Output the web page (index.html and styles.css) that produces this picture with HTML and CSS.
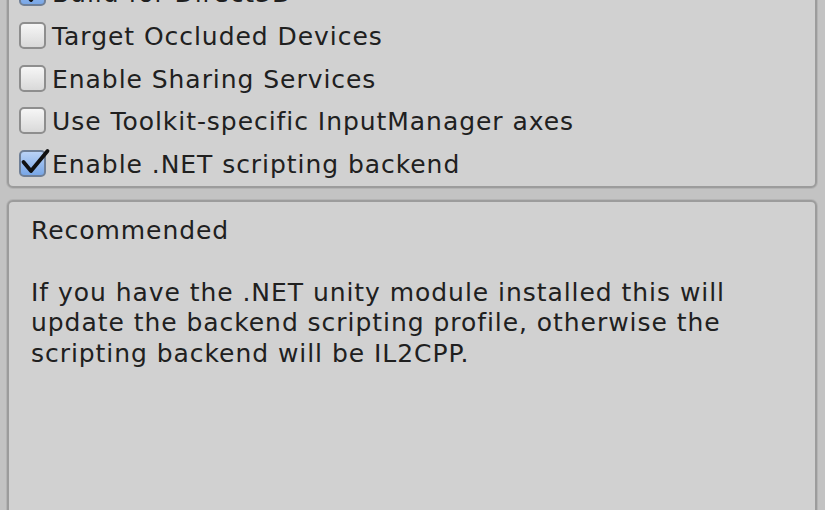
FILE: index.html
```html
<!DOCTYPE html>
<html>
<head>
<meta charset="utf-8">
<link rel="stylesheet" href="styles.css">
</head>
<body>
<div class="panel options">
  <div class="row">
    <span class="box checked"><svg class="tick" viewBox="0 0 30 30"><path d="M4.5 12 L12 21 L28.5 1"/></svg></span>
    <span class="label">Build for Direct3D</span>
  </div>
  <div class="row">
    <span class="box"></span>
    <span class="label">Target Occluded Devices</span>
  </div>
  <div class="row">
    <span class="box"></span>
    <span class="label">Enable Sharing Services</span>
  </div>
  <div class="row">
    <span class="box"></span>
    <span class="label">Use Toolkit-specific InputManager axes</span>
  </div>
  <div class="row">
    <span class="box checked"><svg class="tick" viewBox="0 0 30 30"><path d="M4.5 12 L12 21 L28.5 1"/></svg></span>
    <span class="label">Enable .NET scripting backend</span>
  </div>
</div>
<div class="panel info">
  <p class="heading">Recommended</p>
  <p class="text">If you have the .NET unity module installed this will<br>update the backend scripting profile, otherwise the<br>scripting backend will be IL2CPP.</p>
</div>
</body>
</html>
```
FILE: styles.css
```css
html, body {
  margin: 0;
  padding: 0;
  height: 100%;
  overflow: hidden;
}
body {
  background: #c3c3c3;
  font-family: "DejaVu Sans", Verdana, sans-serif;
  font-size: 25px;
  letter-spacing: 0.95px;
  color: #202020;
}
.panel {
  margin-left: 7px;
  margin-right: 8px;
  background: #d1d1d1;
  border: 2px solid #9c9c9c;
  border-radius: 6px;
  box-shadow: 0 0 0 1px #b4b4b4;
}
.options {
  margin-top: -40px;
  padding: 9.5px 10px 1.5px 10px;
}
.row {
  display: flex;
  align-items: center;
  height: 42.67px;
}
.box {
  position: relative;
  box-sizing: border-box;
  width: 27px;
  height: 27px;
  flex: none;
  border: 2px solid #8e8e8e;
  border-radius: 5px;
  background: linear-gradient(#f6f6f6, #d9d9d9);
  margin-right: 6px;
}
.box.checked {
  border-color: #6f7f96;
  background: linear-gradient(#b9d2f6, #78a6e6);
}
.tick {
  position: absolute;
  left: -2px;
  top: -2px;
  width: 30px;
  height: 30px;
  overflow: visible;
}
.tick path {
  fill: none;
  stroke: #111;
  stroke-width: 3.8;
  stroke-linecap: round;
  stroke-linejoin: round;
}
.label {
  white-space: nowrap;
  padding-top: 2px;
}
.info {
  margin-top: 12px;
  height: 400px;
  padding: 14px 22px 0 22px;
}
.info p {
  margin: 0;
  line-height: 30.7px;
  white-space: nowrap;
}
.heading {
  margin-bottom: 30.7px !important;
}
```
